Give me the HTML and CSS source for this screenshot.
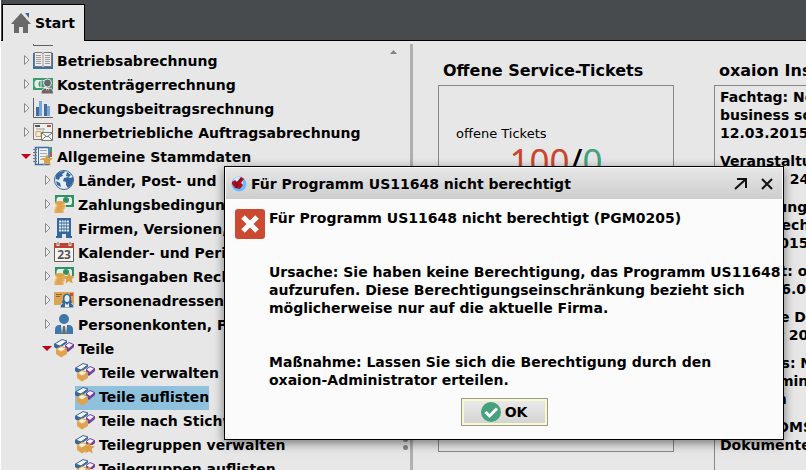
FILE: index.html
```html
<!DOCTYPE html>
<html lang="de">
<head>
  <meta charset="UTF-8">
  <title>Start</title>
  <link rel="stylesheet" href="styles.css">
</head>
<body>
  <svg class="sprites" aria-hidden="true">
    <symbol id="i-closed" viewBox="0 0 12 20"><path d="M3.5 5.5v9l4.5-4.5z" fill="#efefef" stroke="#8b8b8b"/></symbol>
    <symbol id="i-open" viewBox="0 0 12 20"><path d="M0 8h10l-5 5z" fill="#c4001f"/></symbol>
    <symbol id="i-chart" viewBox="0 0 20 20">
      <path d="M.5 0v19.5H20" fill="none" stroke="#606060"/>
      <path d="M3 9h3v9H3zM11 6h3v12h-3z" fill="#3a6ea5"/><path d="M6 3h3v15H6zM14 8h3v10h-3z" fill="#7aa5d6"/>
    </symbol>
    <symbol id="i-book" viewBox="0 0 20 20">
      <path d="M0 3h20v16H0z" fill="#3a6ea5"/>
      <path d="M1.5 2.5H9l1 1 1-1h7.500v14H11l-1 1-1-1H1.500z" fill="#f0eeea" stroke="#777"/>
      <path d="M10 3v14M3 5.500h5M3 7.500h5M3 9.500h5M3 11.500h5M3 13.500h5M12 5.500h5M12 7.500h5M12 9.500h5M12 11.500h5M12 13.500h5" stroke="#999" fill="none"/>
    </symbol>
    <symbol id="i-cost" viewBox="0 0 20 20">
      <path d="M0 4h20v12H0z" fill="#3d9a72"/><path d="M3 6h11v8H3L1.500 12V8z" fill="#e5efe9"/>
      <circle cx="9" cy="10" r="3.500" fill="#3d9a72"/><path d="M8 6v8" stroke="#e5efe9"/>
      <path d="M8 20c0-4 2-6 6.500-6s6 2 6 6z" fill="#686868" stroke="#e7e7e7"/>
      <circle cx="14.500" cy="9" r="4" fill="#686868" stroke="#e7e7e7"/>
      <path d="M13 14h3l-1.500 5z" fill="#eee"/><path d="M14 15h1v4h-1z" fill="#b44a38"/>
    </symbol>
    <symbol id="i-order" viewBox="0 0 20 20">
      <path d="M.5 1.500h19v16H.500z" fill="#efefed" stroke="#777"/>
      <path d="M2 4h5" stroke="#555" stroke-width="2"/><path d="M14 4h4" stroke="#c4533d" stroke-width="2"/>
      <path d="M3 9.500h5v5H3z" fill="#f2ead8" stroke="#d9a54b"/><path d="M3 7h9M9 9h2" stroke="#999"/>
      <path d="M8.500 10.500h11v8h-11z" fill="#f7f7f7" stroke="#777"/><path d="M9 11l5 4 5-4M9 18l4-4M19 18l-4-4" fill="none" stroke="#777"/>
    </symbol>
    <symbol id="i-star" viewBox="0 0 12 12"><path d="M6 0l1.700 4 4.300.300-3.300 2.800 1 4.400L6 9.200l-3.700 2.300 1-4.400L0 4.300 4.300 4z" fill="#d9a045"/></symbol>
    <symbol id="i-master" viewBox="0 0 20 20">
      <path d="M17 1h2v5h-2z" fill="#3d9a72"/><path d="M17 6h2v5h-2z" fill="#c4533d"/>
      <path d="M2.500 1.500h13.500v17H2.500z" fill="#eef1f4" stroke="#3a6ea5" stroke-width="1.500"/>
      <path d="M5.500 2v16" stroke="#3a6ea5"/><path d="M0 3.500h4M0 6.500h4M0 9.500h4M0 12.500h4M0 15.500h4" stroke="#777"/>
      <path d="M7 4.500h7M7 7.500h7M7 10.500h7M7 13.500h3" stroke="#aaa"/>
      <use href="#i-star" x="8" y="8" width="12" height="12"/>
    </symbol>
    <symbol id="i-globe" viewBox="0 0 20 20">
      <circle cx="10" cy="10" r="9.500" fill="#e8edf3" stroke="#34679b"/>
      <path d="M3 4c2-2 5-3 8-3l-1 2-2 1 1 2-3 1-1 3-3-1C1 8 2 5 3 4z" fill="#34679b"/>
      <path d="M10 8l4-1 2 1 3-1c1 4-1 9-5 11l-2-3v-3l-3-1zM13 2l4 3-2 2-3-1zM2 11l4 2 1 4-4-2z" fill="#34679b"/>
    </symbol>
    <symbol id="i-money" viewBox="0 0 20 20">
      <path d="M1 1h19v12H1z" fill="#319068"/><path d="M4 3h13l1 2v4l-1 2H4L2.500 9V5z" fill="#e5efe9"/><circle cx="12" cy="6" r="3" fill="#319068"/>
      <path d="M1 8h10l1 4-2 6H0z" fill="#f3e3c6"/>
      <g fill="#dfa34b"><ellipse cx="5" cy="16" rx="5" ry="1"/><ellipse cx="5" cy="18" rx="5" ry="1"/><ellipse cx="6" cy="14" rx="5" ry="1"/><ellipse cx="7" cy="12" rx="5" ry="1"/><ellipse cx="6" cy="9" rx="5" ry="2"/></g>
    </symbol>
    <symbol id="i-moneystar" viewBox="0 0 20 20"><use href="#i-money" width="20" height="20"/><path d="M12 10h8v4h-8z" fill="#e7e7e7"/><use href="#i-star" x="9" y="6" width="12" height="12"/></symbol>
    <symbol id="i-firm" viewBox="0 0 20 20">
      <path d="M3 0h14v18h1v2h-6v-4H8v4H2v-2h1z" fill="#34679b"/>
      <path d="M5 3.500h10M5 6.500h10M5 9.500h10M5 12.500h10" stroke="#e9eef4" stroke-width="2" stroke-dasharray="2 .66"/>
    </symbol>
    <symbol id="i-cal" viewBox="0 0 20 20">
      <path d="M.5 4v15.500h19V4" fill="#f5f5f3" stroke="#606060"/><path d="M0 1h20v5H0z" fill="#bd432f"/>
      <path d="M4 0v4M16 0v4" stroke="#e7e7e7" stroke-width="3"/><path d="M4 0v3M16 0v3" stroke="#606060"/>
      <text x="10" y="17" text-anchor="middle" class="cal-day">23</text>
    </symbol>
    <symbol id="i-address" viewBox="0 0 20 20">
      <path d="M0 2h20v13H0z" fill="#dda452"/><path d="M16 3h3v3h-3z" fill="#c4533d"/><path d="M2 4.500h6M2 6.500h4" stroke="#8b6540"/>
      <path d="M6 18c0-4 2-5 7-5s7 1 7 5z" fill="#34679b" stroke="#f0f0f0"/>
      <path d="M9 9c-1-7 9-7 8 0l1 4-3 2h-4l-3-2z" fill="#34679b"/><ellipse cx="13" cy="8.500" rx="2.500" ry="3.500" fill="#e9edf2"/><path d="M11 13l2 2 2-2v4h-4z" fill="#f2f2f2"/>
    </symbol>
    <symbol id="i-person" viewBox="0 0 20 20">
      <circle cx="10" cy="5" r="5" fill="#4077aa"/><path d="M1 20v-4c0-4 2-5 5-5h8c3 0 5 1 5 5v4z" fill="#4077aa"/>
      <path d="M7 11h6l-1 9H8z" fill="#eef1f3"/><path d="M9 12h2l1 8H8z" fill="#656565"/>
    </symbol>
    <symbol id="i-parts" viewBox="0 0 20 20">
      <path d="M0 6v3l3 2 4-2 6-4V3z" fill="#34679b"/><path d="M.5 6L8 1.500l5 1.500-7 5z" fill="#f3f6f9" stroke="#34679b"/>
      <path d="M11 8v4l3 2 6-5V6z" fill="#71409a"/><path d="M11 7.500l4-3 4.500 2-4.500 4z" fill="#f7effb" stroke="#71409a"/>
      <path d="M2 11v5l5 3.500 6-3.500v-5l-6 3z" fill="#dfa34b"/><path d="M2.500 11L7 8.500l5.500 2L7 14z" fill="#faedd6" stroke="#dfa34b"/>
    </symbol>
    <symbol id="i-partstar" viewBox="0 0 20 20"><use href="#i-parts" width="20" height="20"/><path d="M12 11h8v7h-8z" fill="#e7e7e7"/><use href="#i-star" x="8" y="8" width="12" height="12"/></symbol>
  </svg>

  <header class="tabbar">
    <button class="tab">
      <svg width="20" height="20" viewBox="0 0 20 20"><path d="M14 0h4v5z" fill="#34679b"/><path d="M10 0l10 11h-3v9h-5v-6H8v6H3v-9H0z" fill="#696969"/></svg>
      Start
    </button>
  </header>

  <main class="workspace">
    <nav class="sidebar">
      <ul class="tree">
        <li class="cut"><a href="#" aria-label="Rechnungswesen"><svg class="arrow"></svg><svg class="icon"><use href="#i-chart"/></svg></a></li>
        <li><a href="#"><svg class="arrow"><use href="#i-closed"/></svg><svg class="icon"><use href="#i-book"/></svg><span>Betriebsabrechnung</span></a></li>
        <li><a href="#"><svg class="arrow"><use href="#i-closed"/></svg><svg class="icon"><use href="#i-cost"/></svg><span>Kostenträgerrechnung</span></a></li>
        <li><a href="#"><svg class="arrow"><use href="#i-closed"/></svg><svg class="icon"><use href="#i-chart"/></svg><span>Deckungsbeitragsrechnung</span></a></li>
        <li><a href="#"><svg class="arrow"><use href="#i-closed"/></svg><svg class="icon"><use href="#i-order"/></svg><span>Innerbetriebliche Auftragsabrechnung</span></a></li>
        <li><a href="#"><svg class="arrow"><use href="#i-open"/></svg><svg class="icon"><use href="#i-master"/></svg><span>Allgemeine Stammdaten</span></a>
          <ul>
            <li><a href="#"><svg class="arrow"><use href="#i-closed"/></svg><svg class="icon"><use href="#i-globe"/></svg><span>Länder, Post- und</span></a></li>
            <li><a href="#"><svg class="arrow"><use href="#i-closed"/></svg><svg class="icon"><use href="#i-money"/></svg><span>Zahlungsbedingungen</span></a></li>
            <li><a href="#"><svg class="arrow"><use href="#i-closed"/></svg><svg class="icon"><use href="#i-firm"/></svg><span>Firmen, Versionen,</span></a></li>
            <li><a href="#"><svg class="arrow"><use href="#i-closed"/></svg><svg class="icon"><use href="#i-cal"/></svg><span>Kalender- und Perioden</span></a></li>
            <li><a href="#"><svg class="arrow"><use href="#i-closed"/></svg><svg class="icon"><use href="#i-moneystar"/></svg><span>Basisangaben Rechnungswesen</span></a></li>
            <li><a href="#"><svg class="arrow"><use href="#i-closed"/></svg><svg class="icon"><use href="#i-address"/></svg><span>Personenadressen</span></a></li>
            <li><a href="#"><svg class="arrow"><use href="#i-closed"/></svg><svg class="icon"><use href="#i-person"/></svg><span>Personenkonten, Personal</span></a></li>
            <li><a href="#"><svg class="arrow"><use href="#i-open"/></svg><svg class="icon"><use href="#i-parts"/></svg><span>Teile</span></a>
              <ul class="leaves">
                <li><a href="#"><svg class="icon"><use href="#i-parts"/></svg><span>Teile verwalten</span></a></li>
                <li><a href="#" class="selected"><svg class="icon"><use href="#i-parts"/></svg><span>Teile auflisten</span></a></li>
                <li><a href="#"><svg class="icon"><use href="#i-parts"/></svg><span>Teile nach Stichwort</span></a></li>
                <li><a href="#"><svg class="icon"><use href="#i-partstar"/></svg><span>Teilegruppen verwalten</span></a></li>
                <li><a href="#"><svg class="icon"><use href="#i-partstar"/></svg><span>Teilegruppen auflisten</span></a></li>
              </ul>
            </li>
          </ul>
        </li>
      </ul>
      <div class="gutter">
        <svg width="7" height="4" viewBox="0 0 7 4"><path d="M0 4h7L3.500 0z" fill="#808589"/></svg>
        <div class="grip"><i></i><i></i></div>
      </div>
    </nav>

    <section class="dashboard">
      <div class="widget">
        <h2>Offene Service-Tickets</h2>
        <div class="box tickets">
          <p>offene Tickets</p>
          <div class="count"><span class="open">100</span>/<span class="done">0</span></div>
        </div>
      </div>
      <div class="widget news">
        <h2>oxaion Insider</h2>
        <div class="box">
          <p>Fachtag: Neue<br>business solutions<br>12.03.2015</p>
          <p>Veranstaltung:<br>Februar, 24.03.2015</p>
          <p>Einführung Start<br>Kostenrechnung<br>21.04.2015</p>
          <p>Webcast: oxaion<br>Berlin 16.04.2015</p>
          <p>Moderne Daten<br>Oktober 2015</p>
          <p>Business: Neue<br>Kurstermine<br>erhalten</p>
          <p>oxaion DMS<br>Dokumente im</p>
        </div>
      </div>
    </section>
  </main>

  <dialog class="message" open aria-labelledby="msg-title">
    <div class="titlebar">
      <svg width="16" height="16" viewBox="0 0 16 16"><circle cx="8" cy="8" r="7.500" fill="#65bfff"/><circle cx="7" cy="6" r="5" fill="#c9edff"/><path d="M1 6l3-2 2 2 4-5 3 2-3 4 2 2-3 4-5-1-3-4z" fill="#b50c1b"/><path d="M3 9l7-6M5 12l2-4" stroke="#650c16"/></svg>
      <span id="msg-title">Für Programm US11648 nicht berechtigt</span>
      <button aria-label="Maximieren"><svg width="14" height="14" viewBox="0 0 14 14"><path d="M1 12L12 2M3 2h9v9" fill="none" stroke="#111" stroke-width="2"/></svg></button>
      <button aria-label="Schließen"><svg width="14" height="14" viewBox="0 0 14 14"><path d="M2 2l10 10M12 2L2 12" fill="none" stroke="#111" stroke-width="2"/></svg></button>
    </div>
    <div class="content">
      <svg width="30" height="30" viewBox="0 0 30 30"><rect width="30" height="30" rx="3" fill="#cb4a31"/><path d="M8 8l14 14M22 8L8 22" stroke="#fff" stroke-width="5"/></svg>
      <div class="text">
        <p>Für Programm US11648 nicht berechtigt (PGM0205)</p>
        <p>Ursache: Sie haben keine Berechtigung, das Programm US11648<br>aufzurufen. Diese Berechtigungseinschränkung bezieht sich<br>möglicherweise nur auf die aktuelle Firma.</p>
        <p>Maßnahme: Lassen Sie sich die Berechtigung durch den<br>oxaion-Administrator erteilen.</p>
      </div>
    </div>
    <button class="ok">
      <svg width="20" height="20" viewBox="0 0 20 20"><circle cx="10" cy="10" r="10" fill="#46a17c"/><path d="M4.500 10l4 4L16 6.500" fill="none" stroke="#fff" stroke-width="3"/></svg>
      OK
    </button>
  </dialog>
</body>
</html>
```

FILE: styles.css
```css
* {
  box-sizing: border-box;
}
body {
  margin: 0;
  height: 100vh;
  overflow: hidden;
  display: flex;
  flex-direction: column;
  border-left: 1px solid #fff;
  background: #e7e7e7;
  color: #000;
  font: bold 14px/18px "DejaVu Sans", Verdana, sans-serif;
}
p, h2, ul {
  margin: 0;
  padding: 0;
}
button {
  font: inherit;
  color: inherit;
}
.sprites {
  position: absolute;
  width: 0;
  height: 0;
}
.cal-day {
  font: bold 12px "Noto Sans", sans-serif;
  fill: #555;
}

/* tabs */
.tabbar {
  display: flex;
  flex: none;
  padding: 4px 1px 0;
  background: #484b4d;
  border-bottom: 1px solid #000;
}
.tab {
  display: flex;
  align-items: center;
  gap: 4px;
  height: 37px;
  margin-bottom: -1px;
  padding: 0 9px 0 8px;
  background: #e7e7e7;
  border: 1px solid #000;
  border-bottom: none;
}

/* tree */
.workspace {
  flex: 1;
  min-height: 0;
  display: flex;
  padding-top: 3px;
}
.sidebar {
  flex: none;
  width: 412px;
  display: flex;
  border-right: 3px solid #b0b0b0;
}
.tree {
  flex: 1;
  overflow: hidden;
  padding-left: 20px;
}
.tree ul {
  padding-left: 21px;
}
.tree .leaves {
  padding-left: 33px;
}
.tree li {
  list-style: none;
}
.tree a {
  display: flex;
  width: max-content;
  height: 24px;
  line-height: 22px;
  color: inherit;
  text-decoration: none;
  white-space: nowrap;
}
.tree .cut a {
  height: 6px;
  overflow: hidden;
  align-items: flex-end;
  padding-bottom: 4px;
}
.tree .selected {
  background: #8fc1dd;
}
.arrow {
  width: 12px;
  height: 20px;
}
.icon {
  width: 20px;
  height: 20px;
  margin-right: 4px;
}
.gutter {
  width: 20px;
  display: flex;
  flex-direction: column;
  padding-top: 6px;
}
.grip {
  display: flex;
  flex-direction: column;
  gap: 3px;
  margin: auto 2px 20px auto;
}
.grip i {
  width: 5px;
  height: 5px;
  border-radius: 50%;
  background: #85898c;
}

/* dashboard */
.dashboard {
  flex: 1;
  display: flex;
  gap: 40px;
  padding: 17px 0 0 25px;
  overflow: hidden;
}
.widget {
  flex: none;
  width: 236px;
  display: flex;
  flex-direction: column;
}
.widget h2 {
  padding-left: 5px;
  margin-bottom: 4px;
  font-size: 16px;
  line-height: 20px;
  white-space: nowrap;
}
.box {
  flex: 1;
  border: 1px solid #85898c;
}
.tickets {
  margin-bottom: 18px;
  padding: 39px 17px;
  font-weight: normal;
  font-size: 13px;
}
.count {
  font-family: "Noto Sans", sans-serif;
  font-size: 35px;
  line-height: 36px;
  text-align: center;
}
.open {
  color: #c9472e;
}
.done {
  color: #46a17c;
}
.news .box {
  padding: 2px 5px;
  border-bottom: none;
  white-space: nowrap;
}
.news p {
  margin-bottom: 10px;
}

/* message window */
.message {
  position: absolute;
  left: 224px;
  top: 166px;
  width: 560px;
  margin: 0;
  padding: 1px 1px 13px;
  color: #000;
  background: #fbfbfb;
  border: 1px solid #000;
  box-shadow: 0 3px 10px rgba(0,0,0,0.5);
}
.titlebar {
  display: flex;
  align-items: center;
  gap: 4px;
  height: 31px;
  padding: 0 4px 0 5px;
  background: linear-gradient(#e6e6e6, #cecece);
}
.titlebar span {
  flex: 1;
}
.titlebar button {
  display: flex;
  padding: 0 4px;
  background: none;
  border: none;
}
.content {
  display: flex;
  gap: 4px;
  padding: 10px 9px 0;
}
.content svg {
  flex: none;
}
.text p {
  margin-bottom: 36px;
  white-space: nowrap;
}
.text p:last-child {
  margin-bottom: 9px;
}
.ok {
  display: flex;
  align-items: center;
  justify-content: center;
  gap: 4px;
  width: 87px;
  height: 28px;
  margin: 0 auto;
  padding: 0;
  background: linear-gradient(#ebebeb, #d2d2d2);
  border: 1px solid #999;
  box-shadow: inset 0 0 0 2px #fafac8;
}
```
